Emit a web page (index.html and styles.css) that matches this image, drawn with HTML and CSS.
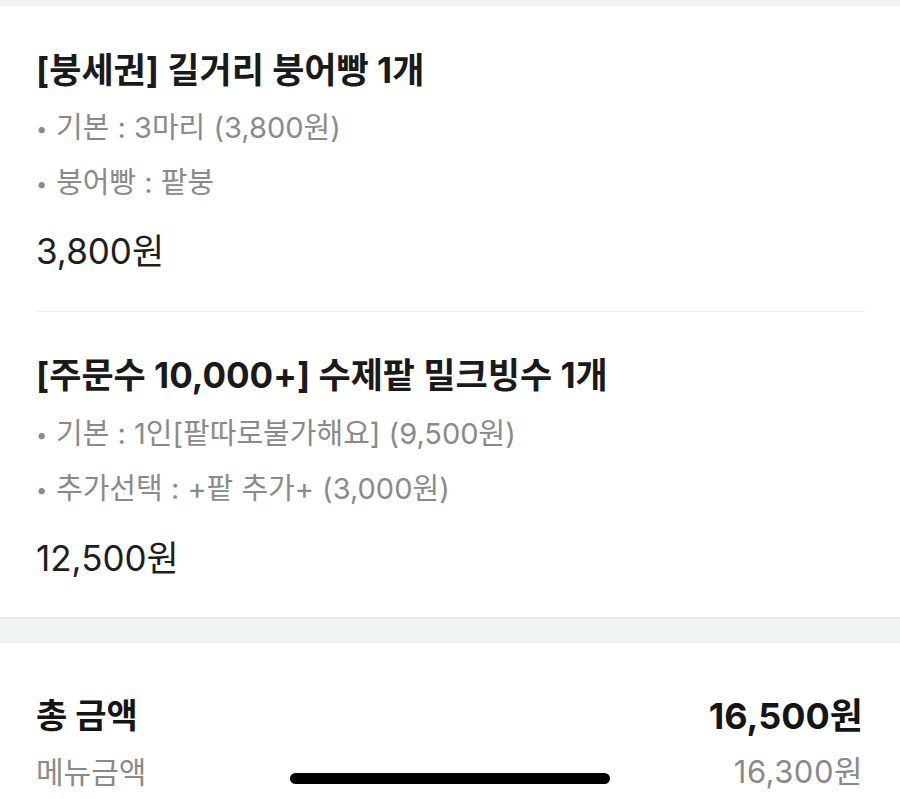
FILE: index.html
```html
<!DOCTYPE html>
<html lang="ko">
<head>
<meta charset="utf-8">
<link rel="stylesheet" href="styles.css">
</head>
<body>
<div class="top-band"></div>
<section class="items">
  <div class="item">
    <h2 class="item-title">[붕세권] 길거리 붕어빵 1개</h2>
    <ul class="options">
      <li>기본 : 3마리 (3,800원)</li>
      <li>붕어빵 : 팥붕</li>
    </ul>
    <div class="item-price">3,800원</div>
  </div>
  <div class="item">
    <h2 class="item-title">[주문수 10,000+] 수제팥 밀크빙수 1개</h2>
    <ul class="options">
      <li>기본 : 1인[팥따로불가해요] (9,500원)</li>
      <li>추가선택 : +팥 추가+ (3,000원)</li>
    </ul>
    <div class="item-price">12,500원</div>
  </div>
</section>
<div class="gap-band"></div>
<section class="summary">
  <div class="row total">
    <span>총 금액</span>
    <span class="amount">16,500원</span>
  </div>
  <div class="row sub">
    <span>메뉴금액</span>
    <span class="amount">16,300원</span>
  </div>
</section>
<div class="home-indicator"></div>
</body>
</html>
```
FILE: styles.css
```css
html, body {
  margin: 0;
  padding: 0;
  background: #ffffff;
}
body {
  width: 900px;
  height: 799px;
  overflow: hidden;
  position: relative;
  font-family: Inter, "Noto Sans CJK KR", sans-serif;
  color: #1c1c1c;
}
.top-band {
  height: 6px;
  background: #f2f4f5;
}
.items {
  padding: 0 35px 0 36px;
}
.item {
  padding: 46px 0 40px;
}
.item + .item {
  border-top: 1px solid #eeeeee;
  padding-top: 45px;
  padding-bottom: 39px;
}
.item + .item .options {
  margin-top: 13px;
}
.item + .item .item-price {
  margin-top: 22px;
}
.item-title {
  margin: 0;
  font-size: 35px;
  font-weight: 700;
  line-height: 36px;
  color: #1a1a1a;
  white-space: nowrap;
}
.options {
  list-style: none;
  margin: 12px 0 0;
  padding: 0;
}
.options li {
  height: 55px;
  font-size: 29px;
  line-height: 55px;
  color: #8a8a8a;
  white-space: nowrap;
}
.options li::before {
  content: "•";
  display: inline-block;
  width: 20px;
  font-size: 20px;
  line-height: 0;
  vertical-align: 2px;
}
.item-price {
  margin-top: 21px;
  font-size: 35px;
  line-height: 40px;
  color: #1e1e1e;
}
.gap-band {
  height: 24px;
  border-top: 2px solid #e6eaea;
  background: #f1f4f4;
}
.summary {
  padding: 53px 37px 0 36px;
}
.row {
  display: flex;
  justify-content: space-between;
  align-items: center;
}
.total {
  font-size: 34px;
  font-weight: 700;
  line-height: 40px;
  color: #151515;
}
.total .amount {
  font-size: 36px;
}
.sub {
  margin-top: 16px;
  font-size: 30px;
  line-height: 40px;
  color: #8a8a8a;
}
.sub .amount {
  font-size: 31px;
  letter-spacing: 0.5px;
}
.home-indicator {
  position: absolute;
  left: 290px;
  top: 773px;
  width: 320px;
  height: 11px;
  border-radius: 6px;
  background: #000000;
}
```
